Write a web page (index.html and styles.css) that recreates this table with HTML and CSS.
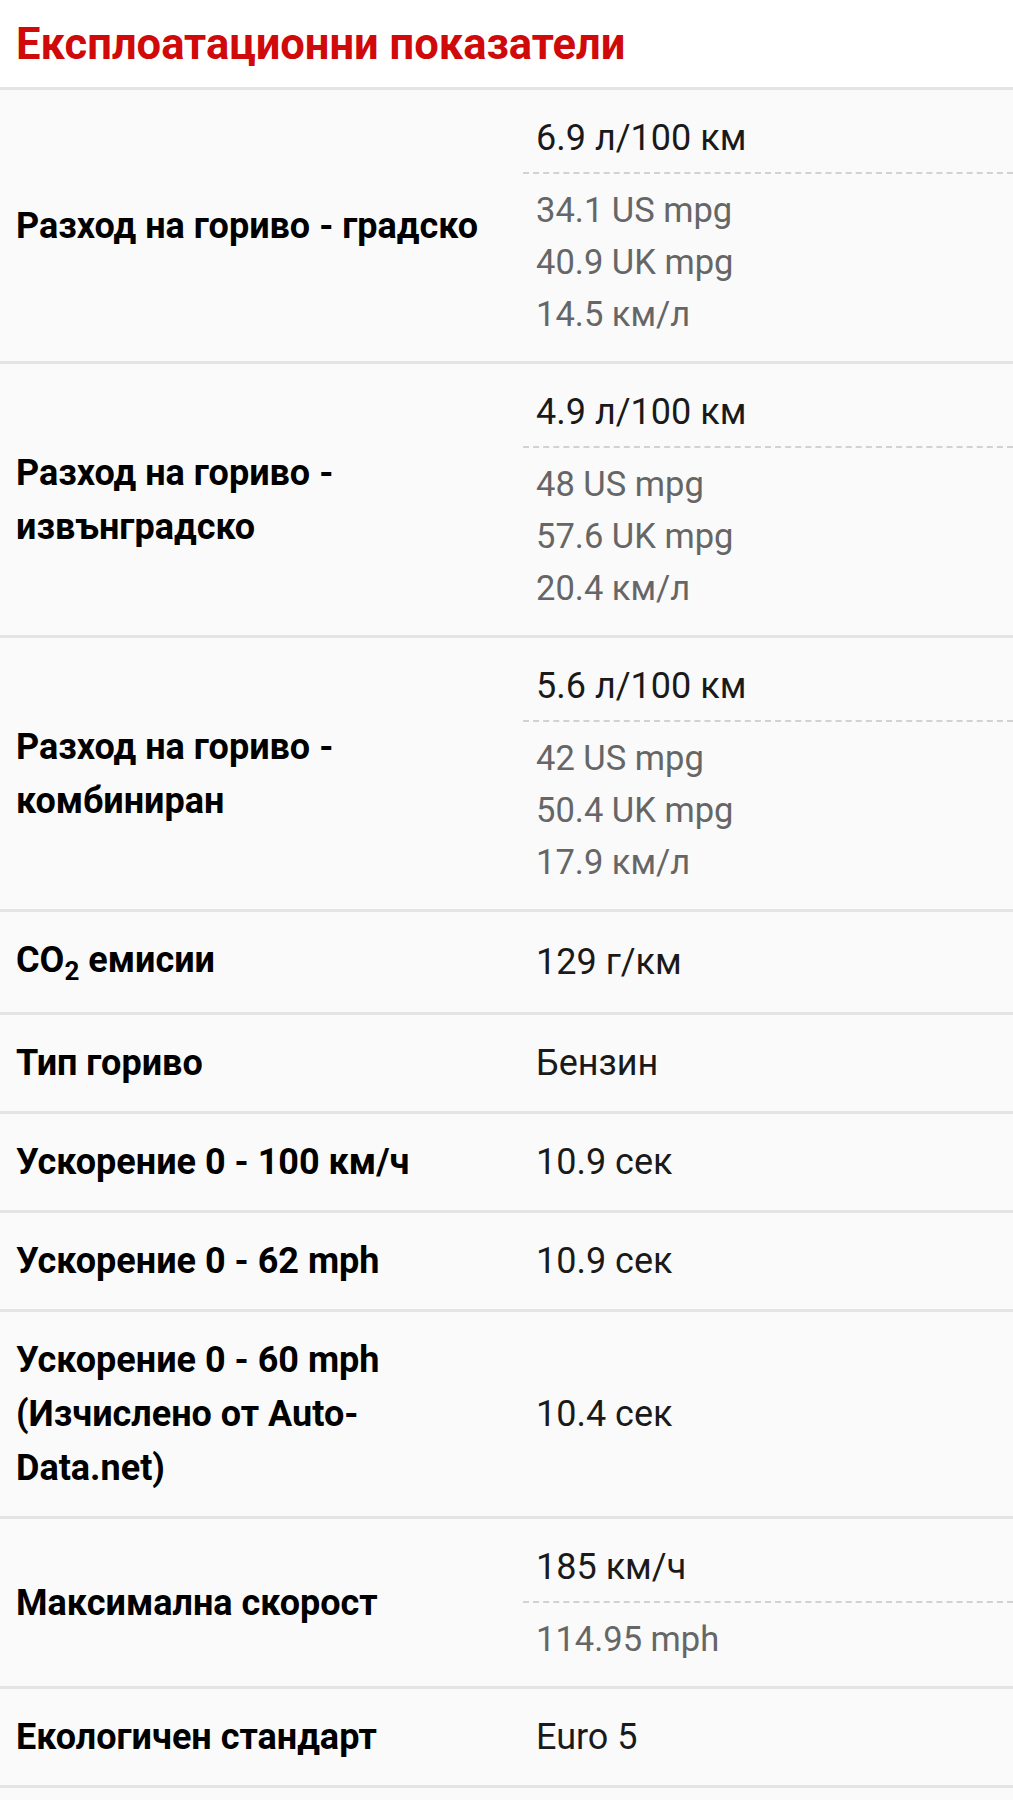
FILE: index.html
```html
<!DOCTYPE html>
<html lang="bg">
<head>
  <meta charset="UTF-8">
  <title>Експлоатационни показатели</title>
  <link rel="stylesheet" href="styles.css">
</head>
<body>
  <h2 class="section-title">Експлоатационни показатели</h2>
  <table class="specs">
    <tr>
      <th>Разход на гориво - градско</th>
      <td>
        <div class="main split">6.9 л/100 км</div>
        <div class="alt">34.1 US mpg<br>40.9 UK mpg<br>14.5 км/л</div>
      </td>
    </tr>
    <tr>
      <th>Разход на гориво - извънградско</th>
      <td>
        <div class="main split">4.9 л/100 км</div>
        <div class="alt">48 US mpg<br>57.6 UK mpg<br>20.4 км/л</div>
      </td>
    </tr>
    <tr>
      <th>Разход на гориво - комбиниран</th>
      <td>
        <div class="main split">5.6 л/100 км</div>
        <div class="alt">42 US mpg<br>50.4 UK mpg<br>17.9 км/л</div>
      </td>
    </tr>
    <tr>
      <th>CO<sub>2</sub> емисии</th>
      <td><div class="main">129 г/км</div></td>
    </tr>
    <tr>
      <th>Тип гориво</th>
      <td><div class="main">Бензин</div></td>
    </tr>
    <tr>
      <th>Ускорение 0 - 100 км/ч</th>
      <td><div class="main">10.9 сек</div></td>
    </tr>
    <tr>
      <th>Ускорение 0 - 62 mph</th>
      <td><div class="main">10.9 сек</div></td>
    </tr>
    <tr>
      <th>Ускорение 0 - 60 mph (Изчислено от Auto-Data.net)</th>
      <td><div class="main">10.4 сек</div></td>
    </tr>
    <tr>
      <th>Максимална скорост</th>
      <td>
        <div class="main split">185 км/ч</div>
        <div class="alt">114.95 mph</div>
      </td>
    </tr>
    <tr>
      <th>Екологичен стандарт</th>
      <td><div class="main">Euro 5</div></td>
    </tr>
  </table>
</body>
</html>
```

FILE: styles.css
```css
html {
  background: #fafafa;
}
body {
  margin: 0;
  font-family: Roboto, "Liberation Sans", Arial, sans-serif;
  color: #111;
}
.section-title {
  margin: 0;
  padding: 19px 16px 16px;
  background: #fff;
  color: #d00a0a;
  font-size: 43.5px;
  line-height: 52px;
  font-weight: 700;
}
.specs {
  width: 100%;
  border-collapse: collapse;
  table-layout: fixed;
  background: #fafafa;
}
.specs tr {
  border-top: 3px solid #e4e4e4;
}
.specs tr:last-child {
  border-bottom: 3px solid #e4e4e4;
}
.specs th {
  width: 523px;
  box-sizing: border-box;
  padding: 21px 36px 21px 16px;
  text-align: left;
  vertical-align: middle;
  font-size: 36px;
  line-height: 54px;
  font-weight: 700;
  color: #000;
}
.specs th sub {
  font-size: 26px;
  line-height: 40px;
  vertical-align: -8px;
}
.specs td {
  padding: 21px 0;
  vertical-align: middle;
}
.main {
  padding-left: 13px;
  font-size: 36px;
  line-height: 54px;
  color: #1a1a1a;
}
.main.split {
  padding-bottom: 7px;
  border-bottom: 2px dashed #d2d2d2;
}
.alt {
  padding: 10px 0 0 13px;
  font-size: 34.5px;
  line-height: 52px;
  color: #666;
}
```
